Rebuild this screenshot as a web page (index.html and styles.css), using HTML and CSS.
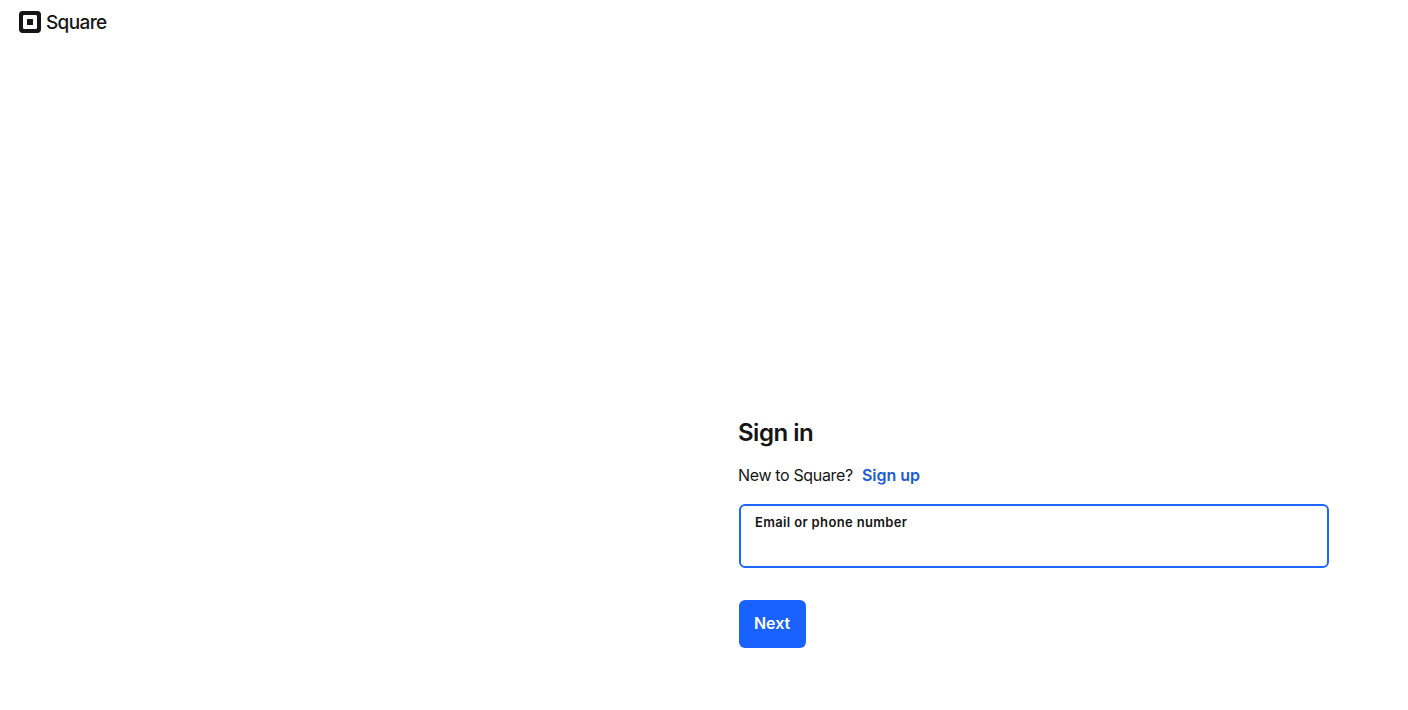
FILE: index.html
```html
<!DOCTYPE html>
<html lang="en">
<head>
    <meta charset="UTF-8">
    <meta name="viewport" content="width=device-width, initial-scale=1.0">
    <title>Sign in - Square</title>
    <link rel="stylesheet" href="styles.css">
</head>
<body>
    <header class="site-header">
        <a class="logo" href="#">
            <svg class="logo-mark" viewBox="0 0 22 22" width="22" height="22" aria-hidden="true">
                <path fill-rule="evenodd" d="M3.7 0h14.6A3.7 3.7 0 0 1 22 3.7v14.6a3.7 3.7 0 0 1-3.7 3.7H3.7A3.7 3.7 0 0 1 0 18.300V3.700A3.700 3.700 0 0 1 3.700 0zM5.200 4A1.200 1.200 0 0 0 4 5.200v11.600A1.200 1.200 0 0 0 5.200 18h11.600a1.200 1.200 0 0 0 1.200-1.200V5.200A1.200 1.200 0 0 0 16.800 4z"/>
                <rect x="8" y="8" width="6" height="6" rx="0.6"/>
            </svg>
            <span class="logo-text">Square</span>
        </a>
    </header>

    <main class="signin">
        <h1 class="signin-title">Sign in</h1>
        <p class="signin-note">New to Square? <a href="#">Sign up</a></p>
        <label class="field">
            <span class="field-label">Email or phone number</span>
            <input class="field-input" type="text">
        </label>
        <button class="btn-next" type="button">Next</button>
    </main>
</body>
</html>
```

FILE: styles.css
```css
body {
    margin: 0;
    height: 710px;
    overflow: hidden;
    background: #fff;
    color: #151515;
    font-family: Inter, "Liberation Sans", sans-serif;
}

.site-header {
    display: flex;
    padding: 11px 19px 0;
    height: 33px;
}

.logo {
    display: flex;
    align-items: center;
    gap: 5px;
    height: 22px;
    color: #151515;
    text-decoration: none;
}

.logo-mark {
    display: block;
    fill: #151515;
}

.logo-text {
    font-size: 19px;
    font-weight: 500;
    letter-spacing: -0.65px;
}

.signin {
    width: 590px;
    margin-left: 739px;
    padding-top: 373px;
}

.signin-title {
    margin: 0 0 0 -1px;
    font-size: 24px;
    line-height: 32px;
    font-weight: 600;
    letter-spacing: -0.5px;
}

.signin-note {
    margin: 14px 0 0 -1px;
    font-size: 16px;
    line-height: 24px;
    letter-spacing: -0.35px;
}

.signin-note a {
    margin-left: 5px;
    color: #1a5bd8;
    font-weight: 600;
    letter-spacing: 0;
    text-decoration: none;
}

.field {
    display: block;
    position: relative;
    margin-top: 17px;
}

.field-label {
    position: absolute;
    top: 10px;
    left: 16px;
    font-size: 13px;
    line-height: 16px;
    font-weight: 600;
    letter-spacing: 0.35px;
}

.field-input {
    display: block;
    box-sizing: border-box;
    width: 100%;
    height: 64px;
    border: 2px solid #1f66ff;
    border-radius: 6px;
    outline: none;
    background: #fff;
}

.btn-next {
    display: block;
    margin-top: 32px;
    width: 67px;
    height: 48px;
    padding: 0 1px 2px 0;
    border: none;
    border-radius: 6px;
    background: #1a62ff;
    color: #fff;
    font-family: inherit;
    font-size: 16px;
    font-weight: 600;
    letter-spacing: -0.05px;
    cursor: pointer;
}
```
